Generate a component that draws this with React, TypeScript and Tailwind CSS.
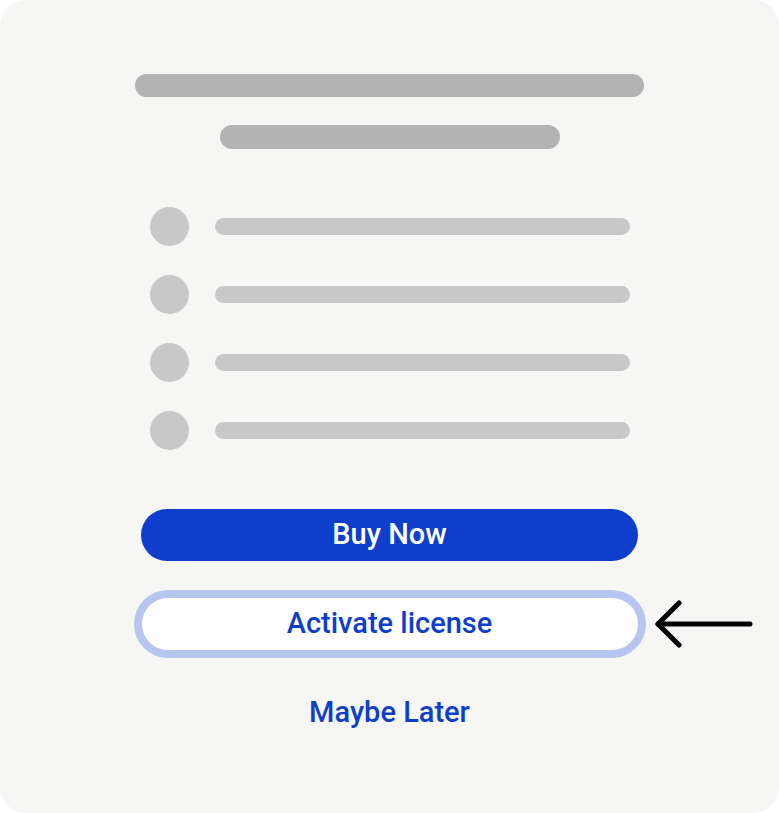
export default function App() {
  const rows = [0, 1, 2, 3]

  return (
    <div className="h-[813px] w-[779px] bg-white">
      <div className="flex h-full w-full flex-col items-center rounded-[26px] bg-[#f6f6f5] pt-[74px] font-['Roboto',sans-serif]">
        <div className="h-[23px] w-[509px] rounded-full bg-[#b3b3b3]" />
        <div className="mt-[28px] h-[24px] w-[340px] rounded-full bg-[#b3b3b3]" />

        <ul className="mt-[58px] flex flex-col gap-[29px]">
          {rows.map((r) => (
            <li key={r} className="flex w-[480px] items-center gap-[26px]">
              <span className="h-[39px] w-[39px] shrink-0 rounded-full bg-[#c8c8c8]" />
              <span className="h-[17px] flex-1 rounded-full bg-[#c8c8c8]" />
            </li>
          ))}
        </ul>

        <button
          type="button"
          className="mt-[59px] flex h-[52px] w-[497px] items-center justify-center rounded-full bg-[#0e3ecb] text-[29px] font-medium text-white"
        >
          Buy Now
        </button>

        <div className="relative mt-[37px]">
          <button
            type="button"
            className="flex h-[52px] w-[496px] items-center justify-center rounded-full bg-white text-[29px] font-medium text-[#0e3ecb] ring-8 ring-[#b7c6ef]"
          >
            Activate license
          </button>
          <svg
            className="absolute left-[512px] top-[2px]"
            width="100"
            height="48"
            viewBox="0 0 100 48"
            fill="none"
            stroke="#000"
            strokeWidth="5"
            strokeLinecap="round"
            strokeLinejoin="round"
          >
            <path d="M4 24H96" />
            <path d="M25 3L4 24L25 45" />
          </svg>
        </div>

        <button type="button" className="mt-[41px] text-[29px] font-medium text-[#0e3ecb]">
          Maybe Later
        </button>
      </div>
    </div>
  )
}
